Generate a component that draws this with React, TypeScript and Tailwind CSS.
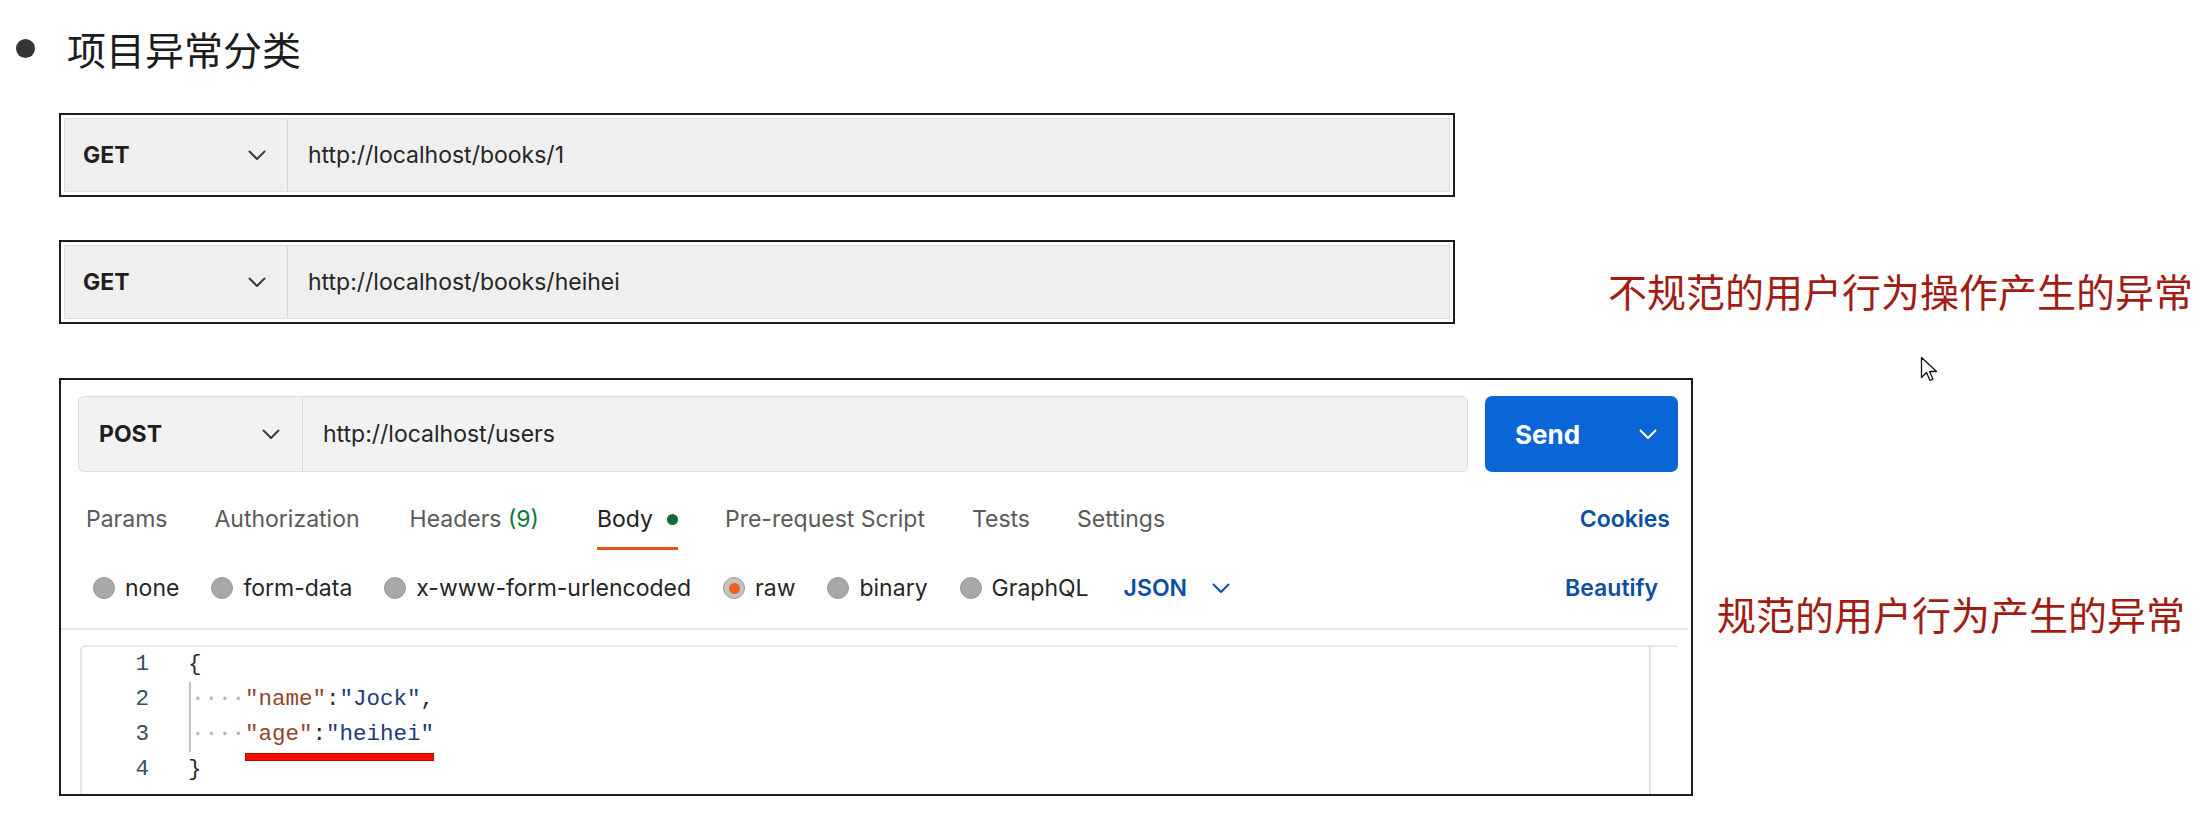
import React from "react";

function Chevron({ color = "#3a3a3a", className = "" }: { color?: string; className?: string }) {
  return (
    <svg className={className} width="18" height="11" viewBox="0 0 18 11" fill="none">
      <path d="M1.5 1.5 9 9l7.5-7.5" stroke={color} strokeWidth="2" strokeLinecap="round" strokeLinejoin="round" />
    </svg>
  );
}

function UrlBar({ url }: { url: string }) {
  return (
    <div className="w-[1396px] h-[84px] shrink-0 border-2 border-[#1c1c1c] p-[3px] bg-white">
      <div className="h-full flex bg-[#efefef] border border-[#dedede]">
        <div className="w-[223px] h-full flex items-center justify-between pl-[18px] pr-[21px] border-r border-[#d4d4d4]">
          <span className="text-[23px] font-bold text-[#1f1f1f]">GET</span>
          <Chevron />
        </div>
        <div className="flex items-center pl-[20px] text-[23px] text-[#262626]">{url}</div>
      </div>
    </div>
  );
}

function Radio({ label, active = false }: { label: string; active?: boolean }) {
  return (
    <div className="flex items-center gap-[10px]">
      {active ? (
        <div className="w-[22px] h-[22px] rounded-full bg-[#c4c4c4] border border-[#9c9c9c] flex items-center justify-center">
          <div className="w-[11px] h-[11px] rounded-full bg-[#f0601f]" />
        </div>
      ) : (
        <div className="w-[22px] h-[22px] rounded-full bg-[#a9a9a9] border border-[#969696]" />
      )}
      <span className="leading-[28px] text-[#262626]">{label}</span>
    </div>
  );
}

const tabs = ["Params", "Authorization", "Headers", "Body", "Pre-request Script", "Tests", "Settings"];

function PostmanPanel() {
  return (
    <div className="w-[1634px] h-[418px] shrink-0 border-2 border-[#1c1c1c] bg-white overflow-hidden flex flex-col">
      {/* request bar + tabs + body types */}
      <div className="pl-[17px] pr-[10px] pt-[16px] pb-[26px] mr-[3px] border-b-2 border-[#e3e3e3] text-[23px]">
        <div className="flex h-[76px]">
          <div className="flex-1 flex rounded-[6px] border border-[#dcdcdc] bg-[#f2f2f2]">
            <div className="w-[224px] flex items-center justify-between pl-[20px] pr-[22px] border-r border-[#d6d6d6]">
              <span className="font-bold text-[#1f1f1f]">POST</span>
              <Chevron />
            </div>
            <div className="flex items-center pl-[20px] text-[#262626]">http://localhost/users</div>
          </div>
          <div className="ml-[17px] w-[193px] rounded-[7px] bg-[#0a66d6] flex items-center justify-between pl-[30px] pr-[21px]">
            <span className="text-[26px] font-bold text-white">Send</span>
            <Chevron color="#ffffff" />
          </div>
        </div>

        <div className="mt-[33px] flex items-start gap-[47px] pl-[8px]">
          {tabs.map((t) => (
            <div key={t} className={t === "Headers" ? "flex flex-col ml-[3px]" : t === "Body" ? "flex flex-col ml-[11px]" : "flex flex-col"}>
              <div className="flex items-center leading-[28px]">
                {t === "Headers" ? (
                  <span className="text-[#5a5a5a]">
                    Headers <span className="text-[#0b7a3e]">(9)</span>
                  </span>
                ) : t === "Body" ? (
                  <>
                    <span className="text-[#212121]">Body</span>
                    <span className="ml-[14px] w-[11px] h-[11px] rounded-full bg-[#0c6b36]" />
                  </>
                ) : (
                  <span className="text-[#5a5a5a]">{t}</span>
                )}
              </div>
              {t === "Body" && <div className="mt-[14px] h-[3px] bg-[#e4551c]" />}
            </div>
          ))}
          <span className="ml-auto pr-[8px] leading-[28px] font-semibold text-[#0b4ea2]">Cookies</span>
        </div>

        <div className="mt-[24px] flex items-center pl-[15px] pr-[20px]">
          <div className="flex items-center gap-[32px]">
            <Radio label="none" />
            <Radio label="form-data" />
            <Radio label="x-www-form-urlencoded" />
            <Radio label="raw" active />
            <Radio label="binary" />
            <Radio label="GraphQL" />
            <div className="ml-[3px] flex items-center gap-[25px]">
              <span className="leading-[28px] font-semibold text-[#0b4ea2]">JSON</span>
              <Chevron color="#0b4ea2" />
            </div>
          </div>
          <span className="ml-auto leading-[28px] font-semibold text-[#0b4ea2]">Beautify</span>
        </div>
      </div>

      {/* editor */}
      <div className="mt-[15px] ml-[19px] mr-[14px] flex-1 flex border-t-2 border-l-2 border-[#e6e6e6] rounded-tl-[6px] font-['Liberation_Mono',monospace] text-[22.5px] leading-[35px]">
        <div className="w-[67px] text-right text-[#35505e]">
          <div>1</div>
          <div>2</div>
          <div>3</div>
          <div>4</div>
        </div>
        <div className="flex-1 pl-[39px] text-[#2a2a2a]">
          <div>{"{"}</div>
          <div className="ml-[1px] border-l-2 border-[#c4c4c4] whitespace-pre">
            <div>
              <span className="text-[#b3b3b3]">····</span>
              <span className="text-[#92452f]">"name"</span>
              <span>:</span>
              <span className="text-[#1f3a78]">"Jock"</span>
              <span>,</span>
            </div>
            <div>
              <span className="text-[#b3b3b3]">····</span>
              <span className="relative inline-block">
                <span className="text-[#92452f]">"age"</span>
                <span>:</span>
                <span className="text-[#1f3a78]">"heihei"</span>
                <span className="absolute left-0 right-0 -bottom-[9px] h-[8px] bg-[#ff0a00] border border-[#9a1208]" />
              </span>
            </div>
          </div>
          <div>{"}"}</div>
        </div>
        <div className="w-[28px] border-l-2 border-[#e3e3e3]" />
      </div>
    </div>
  );
}

export default function App() {
  return (
    <div className="relative w-[2204px] h-[815px] overflow-hidden bg-white font-[Inter,'Noto_Sans_CJK_SC',sans-serif]">
      <div className="pl-[16px] pt-[29px] flex items-center gap-[32px]">
        <div className="w-[19px] h-[19px] rounded-full bg-[#353535]" />
        <h1 className="text-[39px] leading-[39px] text-[#1c1c1c] font-['Noto_Sans_CJK_SC',sans-serif]">项目异常分类</h1>
      </div>

      <div className="pl-[59px] mt-[45px]">
        <UrlBar url="http://localhost/books/1" />

        <div className="mt-[43px] flex items-start">
          <UrlBar url="http://localhost/books/heihei" />
          <p className="ml-[153px] mt-[31px] whitespace-nowrap text-[39px] leading-[39px] text-[#a11d13] font-['Noto_Sans_CJK_SC',sans-serif]">
            不规范的用户行为操作产生的异常
          </p>
        </div>

        <div className="mt-[54px] flex items-start">
          <PostmanPanel />
          <p className="ml-[24px] mt-[216px] whitespace-nowrap text-[39px] leading-[39px] text-[#a11d13] font-['Noto_Sans_CJK_SC',sans-serif]">
            规范的用户行为产生的异常
          </p>
        </div>
      </div>

      {/* mouse pointer */}
      <svg className="absolute left-[1920px] top-[356px]" width="17" height="27" viewBox="0 0 17 27" fill="none">
        <path d="M1.5 1.5v20l5-5 3.5 8 3-1.3-3.4-7.7h7z" fill="#ffffff" stroke="#111111" strokeWidth="1.3" strokeLinejoin="round" />
      </svg>
    </div>
  );
}
